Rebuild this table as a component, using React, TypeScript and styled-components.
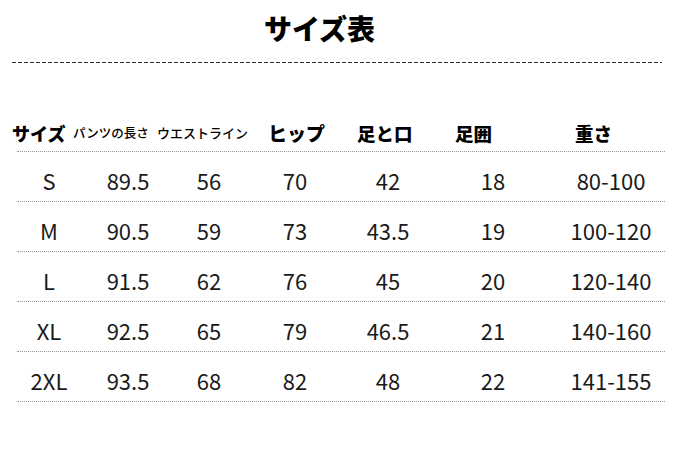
import React, { ReactElement } from 'react'
import styled, { createGlobalStyle } from 'styled-components'

interface HeadCellProps {
    width: number;
    size: number;
    bold: boolean;
}
interface CellProps {
    width: number;
}

const GlobalStyle = createGlobalStyle`
    html, body {
        margin: 0;
        padding: 0;
        background: #ffffff;
    }
    body {
        font-family: "Noto Sans CJK JP", "Noto Sans", sans-serif;
        color: #111111;
    }
`

const Page = styled.div`
    width: 683px;
    height: 465px;
    overflow: hidden;
    padding-top: 14px;
    box-sizing: border-box;
`
const Title = styled.h1`
    margin: 0;
    padding-right: 44px;
    font-size: 28px;
    line-height: 28px;
    font-weight: 900;
    text-align: center;
    color: #000000;
`
const DashedRule = styled.div`
    margin: 20px 0 0 12px;
    width: 650px;
    height: 1px;
    background-image: linear-gradient(to right, #2a2a2a 0 4px, transparent 4px 6px);
    background-size: 6px 1px;
    background-repeat: repeat-x;
`
const Table = styled.div`
    margin: 60px 0 0 17px;
    width: 648px;
`
const HeadRow = styled.div`
    display: flex;
    align-items: center;
    height: 20px;
    padding-bottom: 8px;
    border-bottom: 1px dotted #9a9a9a;
    & > *:first-child {
        margin-left: -5px;
    }
`
const HeadCell = styled.div<HeadCellProps>`
    flex: 0 0 ${(props: HeadCellProps): string => props.width + 'px'};
    font-size: ${(props: HeadCellProps): string => props.size + 'px'};
    font-weight: ${(props: HeadCellProps): number => props.bold ? 900 : 500};
    line-height: 20px;
    white-space: nowrap;
    color: #000000;
`
const Row = styled.div`
    display: flex;
    height: 50px;
    padding-top: 17px;
    box-sizing: border-box;
    border-bottom: 1px dotted #9a9a9a;
`
const Cell = styled.div<CellProps>`
    flex: 0 0 ${(props: CellProps): string => props.width + 'px'};
    text-align: center;
    font-size: 22px;
    line-height: 22px;
    color: #1a1a1a;
`

const headers = [
    { label: 'サイズ', width: 61, size: 18, bold: true },
    { label: 'パンツの長さ', width: 84, size: 12.5, bold: false },
    { label: 'ウエストライン', width: 111, size: 13, bold: false },
    { label: 'ヒップ', width: 89, size: 19, bold: true },
    { label: '足と口', width: 98, size: 18.5, bold: true },
    { label: '足囲', width: 120, size: 18.5, bold: true },
    { label: '重さ', width: 73, size: 18.5, bold: true },
]

const widths = [64, 94, 68, 104, 82, 128, 108]

const rows = [
    ['S', '89.5', '56', '70', '42', '18', '80-100'],
    ['M', '90.5', '59', '73', '43.5', '19', '100-120'],
    ['L', '91.5', '62', '76', '45', '20', '120-140'],
    ['XL', '92.5', '65', '79', '46.5', '21', '140-160'],
    ['2XL', '93.5', '68', '82', '48', '22', '141-155'],
]

export default function App(): ReactElement {
    return (
        <Page>
            <GlobalStyle />
            <Title>サイズ表</Title>
            <DashedRule />
            <Table>
                <HeadRow>
                    {headers.map((h, i): JSX.Element => (
                        <HeadCell key={i} width={h.width} size={h.size} bold={h.bold}>{h.label}</HeadCell>
                    ))}
                </HeadRow>
                {rows.map((row, r): JSX.Element => (
                    <Row key={r}>
                        {row.map((v, c): JSX.Element => (
                            <Cell key={c} width={widths[c]}>{v}</Cell>
                        ))}
                    </Row>
                ))}
            </Table>
        </Page>
    )
}
